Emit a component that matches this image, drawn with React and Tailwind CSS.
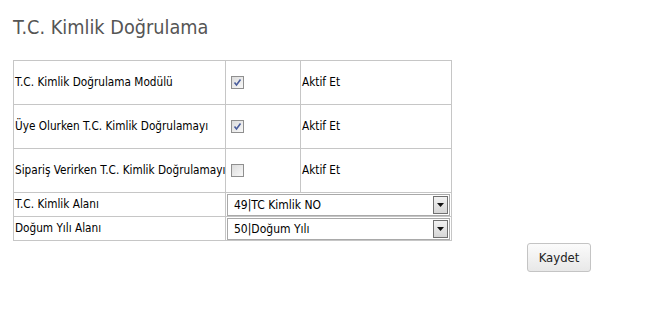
function Check({ checked }) {
  return (
    <span className="inline-block w-[13px] h-[13px] border border-[#8f8f8f] bg-gradient-to-br from-[#dcdcdc] to-[#f8f8f8] relative align-middle">
      {checked && (
        <svg viewBox="0 0 11 11" className="absolute inset-0 w-[11px] h-[11px]">
          <path d="M2.5 5.5 L4.5 8 L8.5 2.5" fill="none" stroke="#4a5d9c" strokeWidth="1.6" />
        </svg>
      )}
    </span>
  );
}

function Select({ value }) {
  return (
    <div className="flex items-center h-[22px] w-[223px] border border-[#a9a9a9] bg-white">
      <span className="flex-1 pl-[6px] text-[12px] text-black">{value}</span>
      <span className="w-[15px] h-[18px] mr-[1px] border border-[#707070] bg-gradient-to-b from-[#f2f2f2] to-[#d6d6d6] flex items-center justify-center">
        <svg viewBox="0 0 7 4" className="w-[7px] h-[4px]">
          <path d="M0 0 H7 L3.5 4 Z" fill="#111" />
        </svg>
      </span>
    </div>
  );
}

const toggles = [
  { label: "T.C. Kimlik Doğrulama Modülü", checked: true },
  { label: "Üye Olurken T.C. Kimlik Doğrulamayı", checked: true },
  { label: "Sipariş Verirken T.C. Kimlik Doğrulamayı", checked: false },
];

export default function App() {
  return (
    <div className="w-[657px] h-[314px] bg-white font-['DejaVu_Sans_Condensed','DejaVu_Sans',sans-serif] text-[11.7px] text-black">
      <h1 className="pl-[13px] pt-[16px] text-[19.7px] leading-[24px] text-[#555555]">T.C. Kimlik Doğrulama</h1>
      <div className="pl-[13px] pt-[20px]">
        <table className="border-collapse table-fixed w-[438px]">
          <colgroup>
            <col className="w-[212px]" />
            <col className="w-[75px]" />
            <col className="w-[151px]" />
          </colgroup>
          <tbody>
            {toggles.map((t) => (
              <tr key={t.label} className="h-[44px]">
                <td className="border border-[#c6c6c6] pl-[1px] whitespace-nowrap">{t.label}</td>
                <td className="border border-[#c6c6c6] pl-[5px]">
                  <Check checked={t.checked} />
                </td>
                <td className="border border-[#c6c6c6] pl-[1px]">Aktif Et</td>
              </tr>
            ))}
            <tr className="h-[24px]">
              <td className="border border-[#c6c6c6] pl-[1px]">T.C. Kimlik Alanı</td>
              <td colSpan={2} className="border border-[#c6c6c6] pl-[1px] py-0">
                <Select value="49|TC Kimlik NO" />
              </td>
            </tr>
            <tr className="h-[24px]">
              <td className="border border-[#c6c6c6] pl-[1px]">Doğum Yılı Alanı</td>
              <td colSpan={2} className="border border-[#c6c6c6] pl-[1px] py-0">
                <Select value="50|Doğum Yılı" />
              </td>
            </tr>
          </tbody>
        </table>
      </div>
      <div className="w-[591px] flex justify-end pt-[2px]">
        <button className="w-[64px] h-[29px] border border-[#c4c4c4] rounded-[3px] bg-gradient-to-b from-[#fbfbfb] to-[#e8e8e8] text-[13px] text-[#222]">
          Kaydet
        </button>
      </div>
    </div>
  );
}
